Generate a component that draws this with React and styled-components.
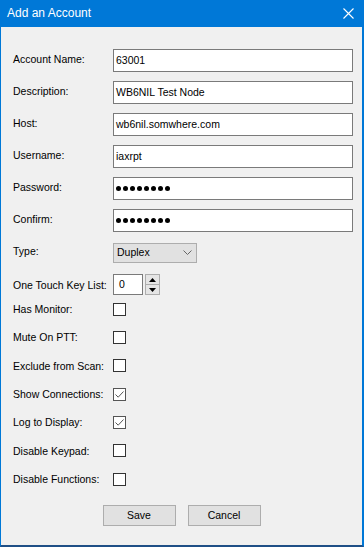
import styled, { createGlobalStyle } from "styled-components";

const Global = createGlobalStyle`
  html, body {
    margin: 0;
    padding: 0;
    background: #f0f0f0;
  }
  body {
    font-family: "Liberation Sans", Arial, sans-serif;
  }
`;

const Window = styled.div`
  width: 364px;
  height: 547px;
  box-sizing: border-box;
  background: #f0f0f0;
  border-left: 1px solid #0078d7;
  border-right: 2px solid #0078d7;
  border-bottom: 2px solid #1f4f86;
  display: flex;
  flex-direction: column;
`;

const TitleBar = styled.div`
  height: 27px;
  margin: 0 -2px 0 -1px;
  background: #0078d7;
  color: #fff;
  display: flex;
  align-items: center;
  justify-content: space-between;
  padding: 0 10px 0 7px;
  font-size: 12px;
  flex-shrink: 0;
`;

const Title = styled.span`
  padding-bottom: 1px;
`;

const Form = styled.div`
  display: flex;
  flex-direction: column;
  padding: 22px 0 0 12px;
  font-size: 10.5px;
  color: #000;
`;

const Fields = styled.div`
  display: flex;
  flex-direction: column;
  gap: 9px;
`;

const Row = styled.div`
  display: flex;
  align-items: center;
  height: ${(p) => p.$h || 23}px;
`;

const Label = styled.div`
  width: 100px;
  flex-shrink: 0;
  padding-bottom: ${(p) => (p.$raise ? 4 : 0)}px;
  white-space: nowrap;
`;

const TextBox = styled.div`
  width: ${(p) => p.$w || 240}px;
  height: ${(p) => p.$ht || 23}px;
  box-sizing: border-box;
  background: #fff;
  border: 1px solid #7a7a7a;
  display: flex;
  align-items: center;
  padding: 0 0 1px ${(p) => p.$pad || 2}px;
  font-size: 10.5px;
`;

const Dots = styled.div`
  display: flex;
  gap: 2px;
`;

const Dot = styled.span`
  width: 5px;
  height: 5px;
  border-radius: 50%;
  background: #000;
`;

const Select = styled.div`
  width: 84px;
  height: 20px;
  box-sizing: border-box;
  background: #e1e1e1;
  border: 1px solid #adadad;
  display: flex;
  align-items: center;
  justify-content: space-between;
  padding: 0 4px 1px 3px;
`;

const Spinner = styled.div`
  display: flex;
  flex-direction: column;
  margin-left: 2px;
  width: 15px;
  height: 21px;
`;

const SpinButton = styled.div`
  flex: 1;
  box-sizing: border-box;
  background: #e5e5e5;
  border: 1px solid #adadad;
  border-top-width: ${(p) => (p.$down ? 0 : 1)}px;
  display: flex;
  align-items: center;
  justify-content: center;
`;

const CheckList = styled.div`
  display: flex;
  flex-direction: column;
  margin-top: -1px;
`;

const Box = styled.div`
  width: 13px;
  height: 13px;
  box-sizing: border-box;
  background: #fff;
  border: 1px solid ${(p) => (p.$checked ? "#555" : "#333")};
  display: flex;
  align-items: center;
  justify-content: center;
`;

const Buttons = styled.div`
  display: flex;
  justify-content: center;
  gap: 12px;
  margin: 12px 0 0 -12px;
`;

const Button = styled.div`
  width: 73px;
  height: 21px;
  box-sizing: border-box;
  background: #e1e1e1;
  border: 1px solid #adadad;
  display: flex;
  align-items: center;
  justify-content: center;
  font-size: 10.5px;
  padding-bottom: 1px;
`;

const fields = [
  { label: "Account Name:", value: "63001" },
  { label: "Description:", value: "WB6NIL Test Node" },
  { label: "Host:", value: "wb6nil.somwhere.com" },
  { label: "Username:", value: "iaxrpt" },
  { label: "Password:", secret: true },
  { label: "Confirm:", secret: true },
];

const checks = [
  { label: "Has Monitor:", on: false },
  { label: "Mute On PTT:", on: false },
  { label: "Exclude from Scan:", on: false },
  { label: "Show Connections:", on: true },
  { label: "Log to Display:", on: true },
  { label: "Disable Keypad:", on: false },
  { label: "Disable Functions:", on: false },
];

function Close() {
  return (
    <svg width="11" height="11" viewBox="0 0 11 11">
      <path d="M0.5 0.5 L10.5 10.5 M10.5 0.5 L0.5 10.5" stroke="#fff" strokeWidth="1.1" />
    </svg>
  );
}

function Chevron() {
  return (
    <svg width="9" height="5" viewBox="0 0 9 5">
      <path d="M0.5 0.5 L4.5 4.5 L8.5 0.5" stroke="#666" strokeWidth="1" fill="none" />
    </svg>
  );
}

function Tri({ down }) {
  return (
    <svg width="7" height="4" viewBox="0 0 7 4">
      <path d={down ? "M0 0 H7 L3.5 4 Z" : "M0 4 H7 L3.5 0 Z"} fill="#000" />
    </svg>
  );
}

function Tick() {
  return (
    <svg width="11" height="11" viewBox="0 0 11 11">
      <path d="M1.5 5.5 L4.2 8.2 L9.5 2.5" stroke="#555" strokeWidth="1" fill="none" />
    </svg>
  );
}

export default function App() {
  return (
    <>
      <Global />
      <Window>
        <TitleBar>
          <Title>Add an Account</Title>
          <Close />
        </TitleBar>
        <Form>
          <Fields>
            {fields.map((f) => (
              <Row key={f.label}>
                <Label $raise>{f.label}</Label>
                <TextBox>
                  {f.secret ? (
                    <Dots>
                      {Array.from({ length: 8 }).map((_, i) => (
                        <Dot key={i} />
                      ))}
                    </Dots>
                  ) : (
                    f.value
                  )}
                </TextBox>
              </Row>
            ))}
            <Row>
              <Label $raise>Type:</Label>
              <Select>
                Duplex
                <Chevron />
              </Select>
            </Row>
            <Row>
              <Label>One Touch Key List:</Label>
              <TextBox $w={30} $ht={21} $pad={5}>
                0
              </TextBox>
              <Spinner>
                <SpinButton>
                  <Tri />
                </SpinButton>
                <SpinButton $down>
                  <Tri down />
                </SpinButton>
              </Spinner>
            </Row>
          </Fields>
          <CheckList>
            {checks.map((c) => (
              <Row key={c.label} $h={28.33}>
                <Label>{c.label}</Label>
                <Box $checked={c.on}>{c.on && <Tick />}</Box>
              </Row>
            ))}
          </CheckList>
          <Buttons>
            <Button>Save</Button>
            <Button>Cancel</Button>
          </Buttons>
        </Form>
      </Window>
    </>
  );
}
